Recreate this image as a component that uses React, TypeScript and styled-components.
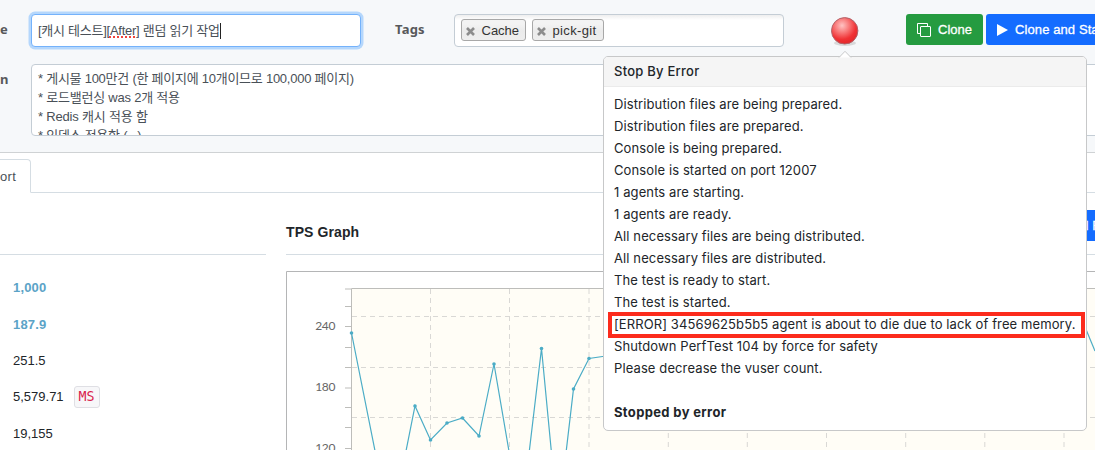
import React from "react";
import styled, { createGlobalStyle } from "styled-components";

const sans = '"Liberation Sans", "Noto Sans CJK KR", sans-serif';

const Global = createGlobalStyle`
  * { box-sizing: border-box; }
  body { margin: 0; background: #fff; color: #212529; font-family: ${sans}; font-size: 13px; }
`;

const Page = styled.div`
  position: relative;
  width: 1095px;
  height: 450px;
  overflow: hidden;
`;

const ConfigPanel = styled.header`
  height: 153px;
  padding-top: 14px;
  background: #f6f8fa;
  border-bottom: 1px solid #cfd2d4;
`;

const Row = styled.div<{ $height: number }>`
  display: flex;
  height: ${(p) => p.$height}px;
`;

const Label = styled.label<{ $width: number; $indent?: number }>`
  flex: none;
  width: ${(p) => p.$width}px;
  padding-left: ${(p) => p.$indent ?? 0}px;
  font: 700 13px/30px "Noto Sans", sans-serif;
  letter-spacing: 0.2px;
  color: #58595b;
`;

const NameInput = styled.div`
  flex: none;
  width: 330px;
  height: 33px;
  padding: 0 6px;
  display: flex;
  align-items: center;
  background: #fff;
  border: 1px solid #74b2fb;
  border-radius: 4px;
  box-shadow: 0 0 0 2.5px #b5d7fc;
  color: #495057;
  line-height: 19px;
  white-space: pre;
`;

const Text = styled.span<{ $spacing?: number }>`
  letter-spacing: ${(p) => p.$spacing ?? 0}px;
`;

const Misspelled = styled.span`
  text-decoration: underline dotted #f0443c 2px;
  text-underline-offset: 1px;
  text-decoration-skip-ink: none;
`;

const Caret = styled.span`
  width: 1px;
  height: 16px;
  background: #222;
`;

const TagField = styled.div`
  flex: none;
  width: 330px;
  height: 33px;
  padding: 4px 6px;
  display: flex;
  gap: 6px;
  background: linear-gradient(#eee, #fff 5px);
  border: 1px solid #c4cdd5;
  border-radius: 4px;
`;

const Tag = styled.span<{ $width: number }>`
  display: flex;
  align-items: center;
  width: ${(p) => p.$width}px;
  height: 22px;
  padding-left: 4px;
  gap: 6.5px;
  border: 1px solid #a8a8a8;
  border-radius: 3px;
  background: linear-gradient(#f3f3f3 20%, #ebebeb 55%, #eee);
  color: #333;
`;

const StatusSlot = styled.div`
  flex: none;
  width: 122px;
  padding: 1px 0 0 45px;
`;

const Button = styled.div<{ $color: string; $width: number }>`
  flex: none;
  display: flex;
  align-items: center;
  width: ${(p) => p.$width}px;
  height: 31px;
  margin-right: 3px;
  padding: 0 11px;
  gap: 7px;
  border-radius: 3px;
  background: ${(p) => p.$color};
  color: #fff;
  font-size: 13px;
  -webkit-text-stroke: 0.3px #fff;
  white-space: nowrap;
`;

const Description = styled.div`
  flex: none;
  width: 1080px;
  height: 72px;
  padding: 4px 6px 0;
  overflow: hidden;
  border: 1px solid #c4cdd5;
  border-radius: 4px;
  background: #fff;
  color: #495057;
`;

const DescriptionLine = styled.div`
  height: 19px;
  line-height: 19px;
  white-space: nowrap;
`;

const TabBar = styled.nav`
  display: flex;
  height: 40px;
  padding-top: 6px;
  border-bottom: 1px solid #d5dde3;
`;

const Tab = styled.div`
  width: 31px;
  height: 34px;
  border: 1px solid #d5dde3;
  border-left: 0;
  border-bottom-color: #fff;
  border-top-right-radius: 4px;
  background: #fff;
  color: #495057;
  line-height: 33px;
`;

const Report = styled.main`
  display: flex;
  gap: 20px;
  height: 257px;
`;

const Summary = styled.section`
  flex: none;
  width: 266px;
  padding-top: 61px;
`;

const SummaryList = styled.div`
  border-top: 1px solid #d5dde3;
  padding-top: 14.5px;
`;

const Value = styled.div<{ $accent?: boolean }>`
  display: flex;
  align-items: center;
  height: 36.4px;
  padding-left: 13px;
  gap: 10px;
  color: ${(p) => (p.$accent ? "#5ba3c7" : "#212529")};
  font-weight: ${(p) => (p.$accent ? 700 : 400)};
`;

const Unit = styled.code`
  width: 26px;
  height: 22px;
  border: 1px solid #dfdfe4;
  border-radius: 3px;
  background: #f7f7f9;
  color: #d9224c;
  font: 13.3px/19px "DejaVu Sans Mono", monospace;
  text-align: center;
`;

const Graphs = styled.section`
  flex: 1;
  min-width: 0;
`;

const GraphHead = styled.div`
  display: flex;
  justify-content: space-between;
  height: 62px;
  padding-top: 17px;
  margin-bottom: 16px;
  border-bottom: 1px solid #d5dde3;
`;

const GraphTitle = styled.h2`
  margin: 0;
  font-size: 14px;
  letter-spacing: 0.1px;
  line-height: 44px;
`;

const DetailButton = styled(Button)`
  margin-right: -57px;
  border-radius: 0;
`;

const Chart = styled.svg`
  display: block;
`;

const Popover = styled.aside`
  position: absolute;
  left: 603px;
  top: 56px;
  width: 484px;
  height: 375px;
  border: 1px solid #c7c8c9;
  border-radius: 5px;
  background: #fff;
  font-family: Inter, sans-serif;
  white-space: nowrap;
`;

const Arrow = styled.svg`
  position: absolute;
  left: 234px;
  top: -7px;
`;

const PopoverTitle = styled.div`
  height: 30px;
  padding-left: 10px;
  border-bottom: 1px solid #ebebeb;
  border-radius: 4px 4px 0 0;
  background: #f5f5f5;
  font-weight: 500;
  letter-spacing: 0.25px;
  line-height: 29px;
`;

const Log = styled.div`
  padding: 6px 10px;
`;

const LogLine = styled.div<{ $strong?: boolean }>`
  position: relative;
  height: 22px;
  line-height: 22px;
  font-weight: ${(p) => (p.$strong ? 700 : 400)};
  letter-spacing: ${(p) => (p.$strong ? 0.35 : 0.11)}px;
`;

const Highlight = styled.div`
  position: absolute;
  left: -6px;
  top: -1px;
  width: 477px;
  height: 26px;
  border: 4px solid #fc2b1c;
`;

const log = [
  "Distribution files are being prepared.",
  "Distribution files are prepared.",
  "Console is being prepared.",
  "Console is started on port 12007",
  "1 agents are starting.",
  "1 agents are ready.",
  "All necessary files are being distributed.",
  "All necessary files are distributed.",
  "The test is ready to start.",
  "The test is started.",
  "[ERROR] 34569625b5b5 agent is about to die due to lack of free memory.",
  "Shutdown PerfTest 104 by force for safety",
  "Please decrease the vuser count.",
];

const points: [number, number][] = [
  [65.5, 62], [103, 250], [106, 250], [129, 135], [144.5, 169], [161, 152],
  [176.5, 147], [193, 165], [208, 93], [235, 250], [255.5, 77.5], [272, 250],
  [287.5, 118], [303, 87.5], [320, 85],
];

const RemoveIcon = () => (
  <svg width="9" height="9" viewBox="0 0 9 9" style={{ marginTop: 2 }}>
    <path d="M1 1L8 8M8 1L1 8" stroke="#8c8c8c" strokeWidth="2.6" />
  </svg>
);

const CopyIcon = () => (
  <svg width="14" height="14" viewBox="0 0 14 14" fill="none" stroke="#fff">
    <path d="M3 10.5H.5V.5H10.5V3" />
    <rect x="3.5" y="3.5" width="10" height="10" rx=".5" />
  </svg>
);

const PlayIcon = () => (
  <svg width="11" height="12" viewBox="0 0 11 12">
    <path d="M0 0L11 6L0 12Z" fill="#fff" />
  </svg>
);

const StatusBall = () => (
  <svg width="32" height="32" viewBox="0 0 32 32">
    <defs>
      <radialGradient id="ball" cx=".4" cy=".3" r=".7">
        <stop offset="0" stopColor="#ffc3c3" />
        <stop offset=".35" stopColor="#f98080" />
        <stop offset=".75" stopColor="#f03134" />
        <stop offset="1" stopColor="#e4282b" />
      </radialGradient>
    </defs>
    <ellipse cx="16" cy="28" rx="11" ry="3" fill="#ccc" opacity=".7" />
    <circle cx="15.7" cy="15.8" r="13.2" fill="url(#ball)" stroke="#b1646a" />
  </svg>
);

const TpsChart = () => (
  <Chart width="809" height="179" viewBox="0 0 809 179">
    <path d="M.5 179V.5H809" fill="none" stroke="#b4b5b6" />
    <rect x="65.5" y="17.5" width="760" height="180" fill="#fffdf6" />
    <g stroke="#d9d8d5" strokeDasharray="5 4">
      {[46, 97, 147].map((y) => <path key={y} d={`M66 ${y - 0.5}H809`} />)}
      {[144.5, 223.5, 303, 382.3, 461.3, 540.5, 619.7, 698.8, 778].map((x) => (
        <path key={x} d={`M${x} 18V179`} />
      ))}
    </g>
    <path d="M65.5 179V17.5H809" fill="none" stroke="#bdbdba" />
    <g stroke="#bdbdba">
      {[18, 35.5, 55.5, 76.5, 96.5, 117, 136.5, 156.5, 177.5].map((y) => (
        <path key={y} d={`M59 ${y}H65`} />
      ))}
    </g>
    <g fill="#666" fontFamily="Lato, sans-serif" fontSize="12" letterSpacing="-.4" textAnchor="end">
      <text x="49" y="59">240</text>
      <text x="49" y="120">180</text>
      <text x="49" y="181">120</text>
    </g>
    <polyline points={points.map((p) => p.join()).join(" ")} fill="none" stroke="#4bacc6" strokeWidth="1.2" />
    <path d="M799 56L809 80" stroke="#4bacc6" strokeWidth="1.2" />
    {points.map(([x, y]) => <circle key={x} cx={x} cy={y} r="1.8" fill="#4bacc6" />)}
  </Chart>
);

export default function App() {
  return (
    <Page>
      <Global />
      <ConfigPanel>
        <Row $height={50}>
          <Label $width={31}>e</Label>
          <NameInput>
            <Text $spacing={-0.26}>[캐시 테스트][<Misspelled>After</Misspelled>] 랜덤 읽기 작업</Text>
            <Caret />
          </NameInput>
          <Label $width={93} $indent={34}>Tags</Label>
          <TagField>
            <Tag $width={65}><RemoveIcon /><Text>Cache</Text></Tag>
            <Tag $width={72}><RemoveIcon /><Text $spacing={0.35}>pick-git</Text></Tag>
          </TagField>
          <StatusSlot><StatusBall /></StatusSlot>
          <Button $color="#259b40" $width={77}><CopyIcon /><Text>Clone</Text></Button>
          <Button $color="#146cff" $width={140}><PlayIcon /><Text $spacing={0.1}>Clone and Start</Text></Button>
        </Row>
        <Row $height={72}>
          <Label $width={31}>n</Label>
          <Description>
            <DescriptionLine><Text $spacing={-0.25}>* 게시물 100만건 (한 페이지에 10개이므로 100,000 페이지)</Text></DescriptionLine>
            <DescriptionLine><Text $spacing={-0.22}>* 로드밸런싱 was 2개 적용</Text></DescriptionLine>
            <DescriptionLine><Text $spacing={-0.18}>* Redis 캐시 적용 함</Text></DescriptionLine>
            <DescriptionLine><Text $spacing={-0.25}>* 인덱스 적용함 (...)</Text></DescriptionLine>
          </Description>
        </Row>
      </ConfigPanel>
      <TabBar><Tab><Text $spacing={0.3}>ort</Text></Tab></TabBar>
      <Report>
        <Summary>
          <SummaryList>
            <Value $accent><Text $spacing={0.15}>1,000</Text></Value>
            <Value $accent><Text $spacing={0.15}>187.9</Text></Value>
            <Value><Text>251.5</Text></Value>
            <Value><Text>5,579.71</Text><Unit>MS</Unit></Value>
            <Value><Text>19,155</Text></Value>
          </SummaryList>
        </Summary>
        <Graphs>
          <GraphHead>
            <GraphTitle>TPS Graph</GraphTitle>
            <DetailButton $color="#146cff" $width={123}><Text $spacing={0.1}>Detailed Report</Text></DetailButton>
          </GraphHead>
          <TpsChart />
        </Graphs>
      </Report>
      <Popover>
        <Arrow width="14" height="8" viewBox="0 0 14 8">
          <path d="M1 7.5L7 1.3L13 7.5" fill="#fff" stroke="#c7c8c9" />
        </Arrow>
        <PopoverTitle>Stop By Error</PopoverTitle>
        <Log>
          {log.map((line) => (
            <LogLine key={line}>
              {line}
              {line.startsWith("[ERROR]") && <Highlight />}
            </LogLine>
          ))}
          <LogLine />
          <LogLine $strong>Stopped by error</LogLine>
        </Log>
      </Popover>
    </Page>
  );
}
